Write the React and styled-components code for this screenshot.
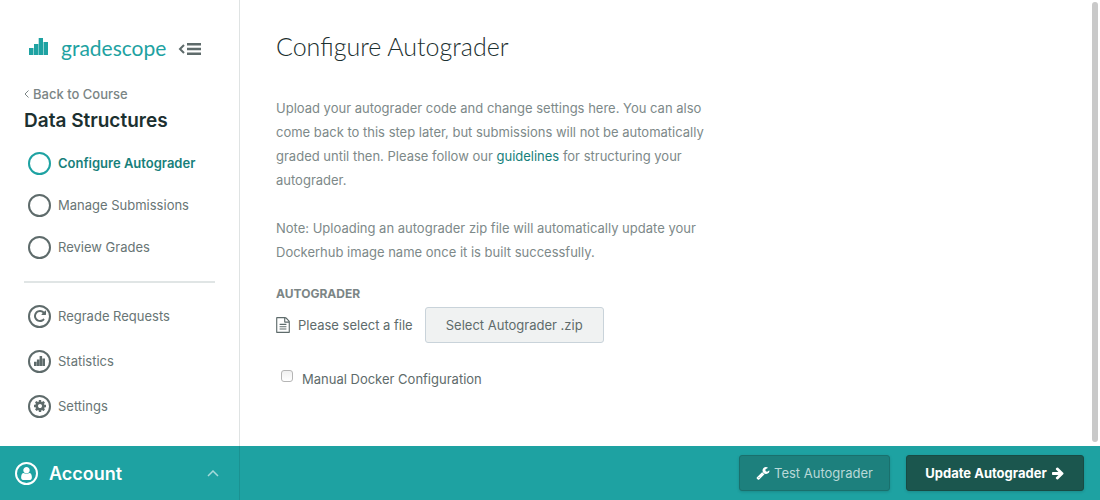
import React from "react";
import styled, { createGlobalStyle, css } from "styled-components";

const GlobalStyle = createGlobalStyle`
  *, *::before, *::after { box-sizing: border-box; }
  body {
    margin: 0;
    background: #fff;
    color: #5e6b6b;
    font-family: Inter, "Liberation Sans", sans-serif;
    font-size: 13px;
    line-height: 24px;
  }
  h1, h2, p, ul { margin: 0; padding: 0; }
  ul { list-style: none; }
  a { color: inherit; text-decoration: none; }
  button { font-family: inherit; cursor: pointer; }
  svg { display: block; flex: none; fill: currentColor; }
`;

const Page = styled.div`
  display: flex;
  flex-direction: column;
  min-height: 100vh;
`;

const Content = styled.div`
  display: flex;
  flex: 1;
`;

const Sidebar = styled.aside`
  flex: none;
  width: 240px;
  padding: 36px 24px 0;
  border-right: 1px solid #dfe3e3;
`;

const Brand = styled.div`
  display: flex;
  align-items: center;
  height: 24px;
  padding-left: 5px;
`;

const BrandLink = styled.a`
  display: flex;
  align-items: center;
  gap: 13px;
  color: #1ea2a2;
  font-family: Lato, sans-serif;
  font-size: 21px;
  font-weight: 400;
`;

const BrandMark = styled.span`
  padding-bottom: 3px;
`;

const CollapseButton = styled.button`
  margin-left: 12px;
  padding: 2px 0 0;
  border: 0;
  background: none;
  color: #5e6b6b;
`;

const BackLink = styled.a`
  display: flex;
  align-items: center;
  gap: 4px;
  margin-top: 22px;
  color: #7b8585;
  font-weight: 500;
`;

const CourseTitle = styled.h2`
  margin-top: 3px;
  color: #1c3030;
  font-size: 19px;
  font-weight: 600;
  line-height: 24px;
`;

const StepList = styled.ul`
  display: grid;
  gap: 18px;
  margin-top: 18px;
`;

const ToolList = styled.ul`
  display: grid;
  gap: 21px;
  margin-top: 22px;
  padding-top: 21px;
  border-top: 2px solid #e0e5e5;
`;

const NavLink = styled.a`
  display: flex;
  align-items: center;
  gap: 7px;
  padding-left: 4px;
  color: ${(p) => (p.$active ? "#177f7b" : "#687575")};
  font-weight: ${(p) => (p.$active ? 600 : 400)};
`;

const Circle = styled.span`
  display: flex;
  flex: none;
  align-items: center;
  justify-content: center;
  width: 23px;
  height: 23px;
  border: 2px solid ${(p) => (p.$active ? "#1ea2a2" : "#5e6b6b")};
  border-radius: 50%;
  color: #5e6b6b;
`;

const Main = styled.main`
  flex: 1;
  padding: 30px 36px 48px;
`;

const Heading = styled.h1`
  color: #1c3030;
  font-family: Lato, sans-serif;
  font-size: 25px;
  font-weight: 300;
  line-height: 32px;
`;

const Intro = styled.div`
  display: grid;
  gap: 24px;
  max-width: 444px;
  margin-top: 34px;
  color: #7d8989;
`;

const TextLink = styled.a`
  color: #177f7b;
`;

const FieldLabel = styled.h2`
  margin-top: 18px;
  color: #7b8585;
  font-size: 12px;
  font-weight: 700;
  line-height: 24px;
`;

const FileRow = styled.div`
  display: flex;
  align-items: center;
  gap: 12px;
  margin-top: 1px;
`;

const FileStatus = styled.span`
  display: flex;
  align-items: center;
  gap: 8px;
`;

const Button = styled.button`
  display: flex;
  align-items: center;
  justify-content: center;
  height: 36px;
  border: 1px solid;
  border-radius: 3px;
  font-size: 13px;
  ${(p) =>
    p.$kind === "plain" &&
    css`
      min-width: 179px;
      border-color: #c9d3da;
      background: #f0f2f2;
      color: #5e6b6b;
    `}
  ${(p) =>
    p.$kind === "muted" &&
    css`
      gap: 4px;
      min-width: 151px;
      border-color: #1a706d;
      background: #1d807d;
      color: #b9d9d8;
      box-shadow: 0 1px 3px rgba(0, 0, 0, 0.15);
      svg { color: #fff; }
    `}
  ${(p) =>
    p.$kind === "primary" &&
    css`
      gap: 4px;
      min-width: 178px;
      border-color: #184b44;
      background: #1b564e;
      color: #fff;
      font-weight: 700;
      box-shadow: 0 1px 3px rgba(0, 0, 0, 0.15);
    `}
`;

const CheckLabel = styled.label`
  display: flex;
  align-items: center;
  gap: 9px;
  width: fit-content;
  margin-top: 24px;
  padding-left: 5px;
`;

const Checkbox = styled.input`
  appearance: none;
  width: 12px;
  height: 12px;
  margin: 0 0 6px;
  border: 1px solid #b5b5b5;
  border-radius: 3px;
  background: linear-gradient(#f0f0f0, #fff);
  &:checked { background: #1ea2a2; }
`;

const Footer = styled.footer`
  display: flex;
  height: 54px;
  background: #1ea2a2;
  color: #fff;
`;

const AccountButton = styled.button`
  display: flex;
  align-items: center;
  gap: 11px;
  width: 240px;
  padding: 1px 20px 0 15px;
  border: 0;
  border-right: 1px solid #1b9292;
  background: none;
  color: #fff;
  font-size: 18px;
  font-weight: 600;
`;

const AccountCircle = styled(Circle)`
  border-color: #fff;
  color: #fff;
`;

const Caret = styled.svg`
  margin-left: auto;
  color: #a5dada;
`;

const Actions = styled.div`
  display: flex;
  flex: 1;
  align-items: center;
  justify-content: flex-end;
  gap: 16px;
  padding-right: 16px;
`;

const ScrollThumb = styled.div`
  position: fixed;
  top: 2px;
  right: 2px;
  bottom: 58px;
  width: 6px;
  border-radius: 3px;
  background: #c9c9c9;
`;

const PATHS = {
  wrench:
    "M448 1472q0-26-19-45t-45-19-45 19-19 45 19 45 45 19 45-19 19-45zm644-420l-682 682q-37 37-90 37-52 0-91-37L123 1626q-38-36-38-90 0-53 38-91l681-681q39 98 114.5 173.5T1092 1052zm634-435q0 39-23 106-47 134-164.5 217.5T1280 1024q-185 0-316.5-131.5T832 576t131.5-316.5T1280 128q58 0 121.5 16.5T1509 191q16 11 16 28t-16 28l-293 169v224l193 107q5-3 79-48.5t135.5-81T1694 582q15 0 23.5 10t8.5 25z",
  arrow:
    "M1600 960q0 54-37 91l-651 651q-39 37-91 37-51 0-90-37l-75-75q-38-38-38-91t38-91l293-293H245q-52 0-84.5-37.5T128 1024V896q0-53 32.5-90.5T245 768h704L656 474q-38-36-38-90t38-90l75-75q38-38 90-38 53 0 91 38l651 651q37 35 37 90z",
  repeat:
    "M1664 256v448q0 26-19 45t-45 19h-448q-42 0-59-40-17-39 14-69l138-138q-148-137-349-137-104 0-198.5 40.5T534 534 424.5 697.5 384 896t40.5 198.5T534 1258t163.5 109.5T896 1408q119 0 225-52t179-147q7-10 23-12 15 0 25 9l137 138q9 8 9.5 20.5T1486 1387q-109 132-264 204.5T896 1664q-156 0-298-61t-245-164-164-245-61-298 61-298 164-245 245-164 298-61q147 0 284.5 55.5T1425 340l130-129q29-31 70-14 39 17 39 59z",
  file:
    "M1596 380q28 28 48 76t20 88v1152q0 40-28 68t-68 28H224q-40 0-68-28t-28-68V96q0-40 28-68t68-28h896q40 0 88 20t76 48zm-444-244v376h376q-10-29-22-41l-313-313q-12-12-41-22zm384 1528V640h-416q-40 0-68-28t-28-68V128H256v1536h1280zM512 800q0-14 9-23t23-9h704q14 0 23 9t9 23v64q0 14-9 23t-23 9H544q-14 0-23-9t-9-23v-64zm736 224q14 0 23 9t9 23v64q0 14-9 23t-23 9H544q-14 0-23-9t-9-23v-64q0-14 9-23t23-9h704zm0 256q14 0 23 9t9 23v64q0 14-9 23t-23 9H544q-14 0-23-9t-9-23v-64q0-14 9-23t23-9h704z",
  cog:
    "M1152 896q0-106-75-181t-181-75-181 75-75 181 75 181 181 75 181-75 75-181zm512-109v222q0 12-8 23t-20 13l-185 28q-19 54-39 91 35 50 107 138 10 12 10 25t-9 23q-27 37-99 108t-94 71q-12 0-26-9l-138-108q-44 23-91 38-16 136-29 186-7 28-36 28H785q-14 0-24.5-8.5T749 1635l-28-184q-49-16-90-37l-141 107q-10 9-25 9-14 0-25-11-126-114-165-168-7-10-7-23 0-12 8-23 15-21 51-66.5t54-70.5q-27-50-41-99l-183-27q-13-2-21-12.5t-8-23.5V783q0-12 8-23t19-13l186-28q14-46 39-92-40-57-107-138-10-12-10-24 0-10 9-23 26-36 98.5-107.5T465 263q13 0 26 10l138 107q44-23 91-38 16-136 29-186 7-28 36-28h222q14 0 24.5 8.5T1043 157l28 184q49 16 90 37l142-107q9-9 24-9 13 0 25 10 129 119 165 170 7 8 7 22 0 12-8 23-15 21-51 66.5t-54 70.5q26 50 41 98l183 28q13 2 21 12.5t8 23.5z",
  user:
    "M1536 1399q0 109-62.5 187t-150.5 78H469q-88 0-150.5-78T256 1399q0-85 8.5-160.5t31.5-152 58.5-131 94-89T583 832q131 128 313 128t313-128q76 0 134.5 34.5t94 89 58.5 131 31.5 152 8.5 160.5zm-256-887q0 159-112.5 271.5T896 896 624.5 783.5 512 512t112.5-271.5T896 128t271.5 112.5T1280 512z",
};

const Glyph = ({ name, size = 14 }) => (
  <svg width={size} height={size} viewBox="0 0 1792 1792" aria-hidden="true">
    <path d={PATHS[name]} />
  </svg>
);

const Bars = ({ width, height }) => (
  <svg width={width} height={height} viewBox="0 0 19 17" aria-hidden="true">
    <path d="M0 10h4.500v7H0zM5 6h4.300v11H5zM9.700 0H14v17H9.700zM14.500 4H19v13h-4.500z" />
  </svg>
);

const steps = [
  { label: "Configure Autograder", active: true },
  { label: "Manage Submissions" },
  { label: "Review Grades" },
];

const tools = [
  { label: "Regrade Requests", icon: <Glyph name="repeat" /> },
  { label: "Statistics", icon: <Bars width={11} height={10} /> },
  { label: "Settings", icon: <Glyph name="cog" /> },
];

export default function App() {
  return (
    <Page>
      <GlobalStyle />
      <Content>
        <Sidebar>
          <Brand>
            <BrandLink href="#">
              <BrandMark>
                <Bars width={19} height={17} />
              </BrandMark>
              gradescope
            </BrandLink>
            <CollapseButton type="button" aria-label="Collapse sidebar">
              <svg width="23" height="12" viewBox="0 0 23 12" aria-hidden="true">
                <path d="M9 0h14v2.400H9zM9 4.800h14v2.400H9zM9 9.600h14V12H9z" />
                <path d="M6 2L2 6l4 4" fill="none" stroke="currentColor" strokeWidth="2" />
              </svg>
            </CollapseButton>
          </Brand>
          <BackLink href="#">
            <svg width="5" height="8" viewBox="0 0 5 8" aria-hidden="true">
              <path d="M4.500 .5L1 4l3.500 3.500" fill="none" stroke="currentColor" />
            </svg>
            Back to Course
          </BackLink>
          <CourseTitle>Data Structures</CourseTitle>
          <nav>
            <StepList>
              {steps.map((s) => (
                <li key={s.label}>
                  <NavLink href="#" $active={s.active}>
                    <Circle $active={s.active} />
                    {s.label}
                  </NavLink>
                </li>
              ))}
            </StepList>
            <ToolList>
              {tools.map((t) => (
                <li key={t.label}>
                  <NavLink href="#">
                    <Circle>{t.icon}</Circle>
                    {t.label}
                  </NavLink>
                </li>
              ))}
            </ToolList>
          </nav>
        </Sidebar>
        <Main>
          <Heading>Configure Autograder</Heading>
          <Intro>
            <p>
              Upload your autograder code and change settings here. You can also come back to this
              step later, but submissions will not be automatically graded until then. Please follow
              our <TextLink href="#">guidelines</TextLink> for structuring your autograder.
            </p>
            <p>
              Note: Uploading an autograder zip file will automatically update your Dockerhub image
              name once it is built successfully.
            </p>
          </Intro>
          <FieldLabel>AUTOGRADER</FieldLabel>
          <FileRow>
            <FileStatus>
              <svg width="14" height="16" viewBox="128 0 1536 1792" aria-hidden="true">
                <path d={PATHS.file} />
              </svg>
              Please select a file
            </FileStatus>
            <Button type="button" $kind="plain">
              Select Autograder .zip
            </Button>
          </FileRow>
          <CheckLabel>
            <Checkbox type="checkbox" />
            Manual Docker Configuration
          </CheckLabel>
        </Main>
      </Content>
      <Footer>
        <AccountButton type="button">
          <AccountCircle>
            <Glyph name="user" size={15} />
          </AccountCircle>
          Account
          <Caret width="12" height="7" viewBox="0 0 12 7" aria-hidden="true">
            <path d="M1 6l5-5 5 5" fill="none" stroke="currentColor" strokeWidth="1.500" />
          </Caret>
        </AccountButton>
        <Actions>
          <Button type="button" $kind="muted">
            <Glyph name="wrench" />
            Test Autograder
          </Button>
          <Button type="button" $kind="primary">
            Update Autograder
            <Glyph name="arrow" />
          </Button>
        </Actions>
      </Footer>
      <ScrollThumb />
    </Page>
  );
}
